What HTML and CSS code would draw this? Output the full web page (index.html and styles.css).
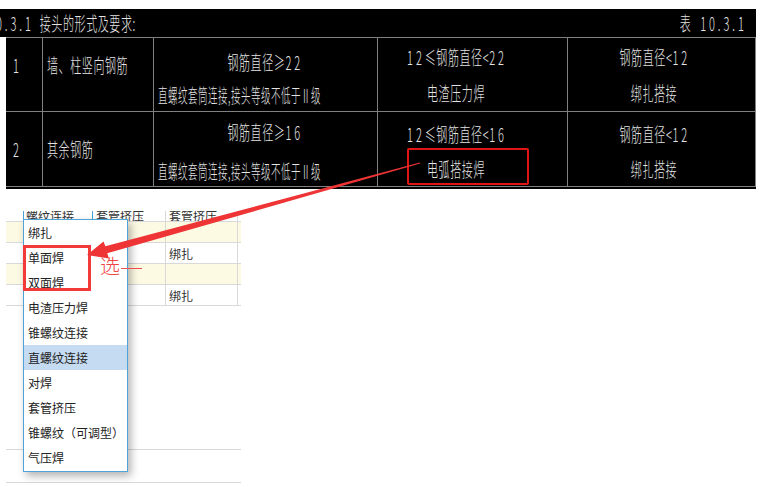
FILE: index.html
```html
<!DOCTYPE html>
<html lang="zh-CN">
<head>
    <meta charset="UTF-8">
    <title>接头的形式及要求</title>
    <link rel="stylesheet" href="styles.css">
</head>
<body>

    <!-- CAD drawing of table 10.3.1 -->
    <div class="sheet">
        <div class="sheet-title">
            <span class="t l title-left"><span class="n">0.3.1</span>&nbsp;&nbsp;接头的形式及要求:</span>
            <span class="t r title-right">表&nbsp;&nbsp;&nbsp;<span class="n">10.3.1</span></span>
        </div>
        <div class="sheet-body">
            <div class="sheet-row row-1">
                <div class="cell cell-no"><span class="t l"><span class="n">1</span></span></div>
                <div class="cell cell-name"><span class="t l">墙、柱竖向钢筋</span></div>
                <div class="cell stack col-a">
                    <span class="t">钢筋直径≥<span class="n">22</span></span>
                    <span class="t sm l wide">直螺纹套筒连接,接头等级不低于Ⅱ级</span>
                </div>
                <div class="cell stack col-b">
                    <span class="t"><span class="n">12</span>≤钢筋直径&lt;<span class="n">22</span></span>
                    <span class="t">电渣压力焊</span>
                </div>
                <div class="cell stack col-c">
                    <span class="t">钢筋直径&lt;<span class="n">12</span></span>
                    <span class="t">绑扎搭接</span>
                </div>
            </div>
            <div class="sheet-row row-2">
                <div class="cell cell-no"><span class="t l"><span class="n">2</span></span></div>
                <div class="cell cell-name"><span class="t l">其余钢筋</span></div>
                <div class="cell stack col-a">
                    <span class="t">钢筋直径≥<span class="n">16</span></span>
                    <span class="t sm l wide">直螺纹套筒连接,接头等级不低于Ⅱ级</span>
                </div>
                <div class="cell stack col-b">
                    <span class="t"><span class="n">12</span>≤钢筋直径&lt;<span class="n">16</span></span>
                    <span class="t">电弧搭接焊</span>
                </div>
                <div class="cell stack col-c">
                    <span class="t">钢筋直径&lt;<span class="n">12</span></span>
                    <span class="t">绑扎搭接</span>
                </div>
            </div>
        </div>
    </div>

    <!-- Software grid below -->
    <div class="grid">
        <div class="grow ghead">
            <div class="gc"></div>
            <div class="gc sel"><span>螺纹连接</span></div>
            <div class="gc"><span>套管挤压</span></div>
            <div class="gc"><span>套管挤压</span></div>
            <div class="gc"></div>
        </div>
        <div class="grow yellow">
            <div class="gc"></div><div class="gc"></div><div class="gc"></div><div class="gc"></div><div class="gc"></div>
        </div>
        <div class="grow">
            <div class="gc"></div><div class="gc"></div><div class="gc"></div><div class="gc">绑扎</div><div class="gc"></div>
        </div>
        <div class="grow yellow">
            <div class="gc"></div><div class="gc"></div><div class="gc"></div><div class="gc"></div><div class="gc"></div>
        </div>
        <div class="grow">
            <div class="gc"></div><div class="gc"></div><div class="gc"></div><div class="gc">绑扎</div><div class="gc"></div>
        </div>
        <div class="gblank"></div>
        <div class="glast"></div>
    </div>

    <!-- Dropdown list -->
    <ul class="dropdown">
        <li>绑扎</li>
        <li>单面焊</li>
        <li>双面焊</li>
        <li>电渣压力焊</li>
        <li>锥螺纹连接</li>
        <li class="active">直螺纹连接</li>
        <li>对焊</li>
        <li>套管挤压</li>
        <li>锥螺纹（可调型）</li>
        <li>气压焊</li>
    </ul>

    <!-- Red annotations -->
    <div class="mark mark-cad"></div>
    <div class="mark mark-list"></div>
    <span class="pick">选</span>
    <span class="pick-line"></span>
    <svg class="arrow" width="783" height="487" viewBox="0 0 783 487">
        <polygon fill="#ee3434" points="87,255 103.5,241.5 105.4,246.3 419.9,162.5 420.1,163.6 107.2,253.3 109,258.5"/>
    </svg>

</body>
</html>
```

FILE: styles.css
```css
body {
    margin: 0;
    padding-top: 9px;
    width: 783px;
    height: 487px;
    overflow: hidden;
    position: relative;
    background-color: #fff;
    font-family: "Noto Sans CJK SC", sans-serif;
    box-sizing: border-box;
}

/* CAD sheet */
.sheet-title {
    width: 756px;
    height: 28px;
    background-color: #000;
    color: #e4e4e4;
    display: flex;
    justify-content: space-between;
    align-items: center;
    overflow: hidden;
}
.title-left {
    margin-left: -4px;
}
.title-right {
    margin-right: 9px;
}
.sheet-body {
    margin-left: 6px;
    width: 750px;
    background-color: #000;
    border-top: 1px solid #808080;
    padding-bottom: 2px;
}
.sheet-row {
    display: grid;
    grid-template-columns: 37px 111px 224px 190px 188px;
    border-bottom: 1px solid #808080;
    box-sizing: border-box;
}
.row-1 {
    height: 74px;
}
.row-2 {
    height: 75px;
}
.cell {
    border-right: 1px solid #808080;
    box-sizing: border-box;
    color: #e4e4e4;
    overflow: visible;
    min-width: 0;
}
.cell-no {
    padding-left: 7px;
}
.cell-name {
    padding-left: 4px;
}
.row-1 .cell-no,
.row-1 .cell-name {
    padding-top: 16px;
}
.row-2 .cell-no,
.row-2 .cell-name {
    padding-top: 26px;
}
.stack {
    display: flex;
    flex-direction: column;
    align-items: center;
}
.row-1 .col-a {
    padding-top: 13px;
    gap: 11px;
}
.row-1 .col-b,
.row-1 .col-c {
    padding-top: 8px;
    gap: 14px;
}
.row-2 .col-a {
    padding-top: 9px;
    gap: 17px;
}
.row-2 .col-b,
.row-2 .col-c {
    padding-top: 11px;
    gap: 13px;
}
.col-b {
    padding-right: 32px;
}
.col-c {
    padding-right: 14px;
}
.wide {
    align-self: flex-start;
    margin-left: 4px;
}

/* condensed CAD lettering */
.t {
    display: inline-block;
    font-size: 19px;
    line-height: 22px;
    font-weight: 300;
    letter-spacing: 1px;
    white-space: nowrap;
    transform: scaleX(0.58);
}
.t.sm {
    transform: scaleX(0.5);
}
.t.l {
    transform-origin: left center;
}
.t.r {
    transform-origin: right center;
}
.t .n {
    letter-spacing: 5px;
}

/* software grid */
.grid {
    margin: 22px 0 0 6px;
    width: 235px;
    font-size: 12px;
    color: #333;
}
.grow {
    display: grid;
    grid-template-columns: 17px 70px 73px 72px 3px;
    height: 21px;
    border-bottom: 1px solid #d9d9d9;
    box-sizing: border-box;
}
.grow.yellow {
    background-color: #fdfae4;
}
.gc {
    border-right: 1px solid #d9d9d9;
    padding-left: 3px;
    display: flex;
    align-items: center;
    overflow: hidden;
    white-space: nowrap;
    box-sizing: border-box;
}
.gc:first-child,
.gc:last-child {
    border-right: none;
}
.ghead {
    height: 11px;
    overflow: hidden;
}
.ghead .gc {
    align-items: flex-end;
    line-height: 14px;
}
.ghead .gc span {
    display: block;
    margin-bottom: -2px;
}
.gc.sel {
    border-right-color: #4a9fd6;
    box-shadow: inset 1px 0 #4a9fd6;
}
.gblank {
    height: 144px;
    border-bottom: 1px solid #d9d9d9;
    box-sizing: border-box;
}
.glast {
    height: 33px;
    border-bottom: 1px solid #d9d9d9;
    box-sizing: border-box;
}

/* dropdown */
.dropdown {
    position: absolute;
    left: 23px;
    top: 219px;
    width: 105px;
    height: 253px;
    margin: 0;
    padding: 0;
    list-style: none;
    background-color: #fff;
    border: 1px solid #4ea4d8;
    box-sizing: border-box;
    box-shadow: 3px 4px 8px rgba(0, 0, 0, 0.3);
    font-size: 12px;
    color: #222;
}
.dropdown li {
    height: 25px;
    line-height: 25px;
    padding-left: 4px;
    white-space: nowrap;
}
.dropdown li.active {
    background-color: #c5dbf1;
}

/* annotations */
.mark {
    position: absolute;
    box-sizing: border-box;
}
.mark-cad {
    left: 407px;
    top: 148px;
    width: 122px;
    height: 37px;
    border: 2px solid #e01616;
    border-radius: 2px;
}
.mark-list {
    left: 23px;
    top: 245px;
    width: 68px;
    height: 46px;
    border: 3px solid #f23a3a;
}
.pick {
    position: absolute;
    left: 100px;
    top: 256px;
    font-size: 20px;
    line-height: 20px;
    font-weight: 300;
    color: #f04444;
}
.pick-line {
    position: absolute;
    left: 121px;
    top: 268px;
    width: 21px;
    height: 1px;
    background-color: #f05050;
}
.arrow {
    position: absolute;
    left: 0;
    top: 0;
    pointer-events: none;
}
```
